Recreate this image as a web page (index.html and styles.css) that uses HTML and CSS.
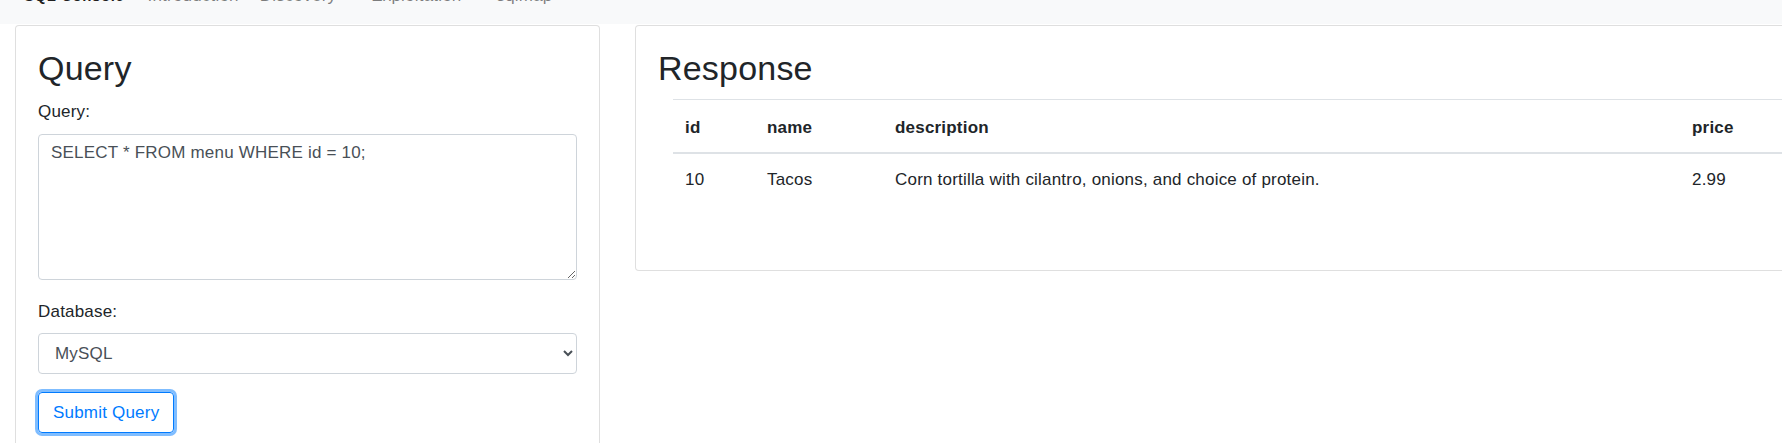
FILE: index.html
```html
<!DOCTYPE html>
<html lang="en">
<head>
<meta charset="utf-8">
<title>SQL Console</title>
<link rel="stylesheet" href="styles.css">
</head>
<body>
<nav class="navbar">
  <span class="brand">SQL Console</span>
  <ul class="nav">
    <li class="nav-item"><a class="nav-link">Introduction</a></li>
    <li class="nav-item"><a class="nav-link dropdown">Discovery</a></li>
    <li class="nav-item"><a class="nav-link dropdown">Exploitation</a></li>
    <li class="nav-item"><a class="nav-link">sqlmap</a></li>
  </ul>
</nav>
<main class="main">
  <section class="card card-query">
    <h2 class="card-title">Query</h2>
    <form class="form">
      <label class="label label-first" for="q">Query:</label>
      <textarea id="q" class="control textarea">SELECT * FROM menu WHERE id = 10;</textarea>
      <label class="label label-db" for="db">Database:</label>
      <select id="db" class="control select">
        <option>MySQL</option>
        <option>PostgreSQL</option>
        <option>SQLite</option>
      </select>
      <button type="button" class="btn">Submit Query</button>
    </form>
  </section>
  <section class="card card-response">
    <h2 class="card-title">Response</h2>
    <div class="table-wrap">
      <table class="table">
        <thead>
          <tr>
            <th class="c-id">id</th>
            <th class="c-name">name</th>
            <th class="c-desc">description</th>
            <th class="c-price">price</th>
          </tr>
        </thead>
        <tbody>
          <tr>
            <td>10</td>
            <td>Tacos</td>
            <td>Corn tortilla with cilantro, onions, and choice of protein.</td>
            <td>2.99</td>
          </tr>
        </tbody>
      </table>
    </div>
  </section>
</main>
</body>
</html>
```
FILE: styles.css
```css
html, body {
  margin: 0;
  overflow: hidden;
  background: #fff;
}
body {
  font-family: "Liberation Sans", Arial, sans-serif;
  font-size: 17px;
  line-height: 24px;
  color: #212529;
  letter-spacing: 0.2px;
}

/* navbar (page is scrolled: only its lower part shows) */
.navbar {
  display: flex;
  align-items: center;
  height: 56px;
  box-sizing: border-box;
  margin-top: -32px;
  padding: 8px 16px 8px 24px;
  background: #f8f9fa;
}
.brand {
  font-weight: 700;
  font-size: 15px;
  letter-spacing: 0.6px;
  color: rgba(0, 0, 0, 0.9);
  margin-right: 15px;
}
.nav {
  display: flex;
  gap: 5px;
  list-style: none;
  margin: 0;
  padding: 0;
}
.nav-link {
  display: block;
  padding: 8px;
  color: rgba(0, 0, 0, 0.5);
}
.dropdown::after {
  content: "";
  display: inline-block;
  margin-left: 4px;
  vertical-align: 4px;
  border-top: 5px solid;
  border-right: 5px solid transparent;
  border-left: 5px solid transparent;
}

/* layout */
.main {
  display: flex;
  align-items: flex-start;
  gap: 35px;
  margin-top: 1px;
  padding-left: 15px;
}
.card {
  flex: none;
  box-sizing: border-box;
  border: 1px solid rgba(0, 0, 0, 0.125);
  border-radius: 4px;
  background: #fff;
  padding: 23px 22px 22px;
}
.card-query {
  width: 585px;
}
.card-response {
  width: 1250px;
}
.card-title {
  margin: 0 0 12px;
  font-size: 34px;
  font-weight: 400;
  line-height: 38px;
  letter-spacing: 0.2px;
}

/* form */
.form {
  display: flex;
  flex-direction: column;
  align-items: flex-start;
}
.label {
  display: block;
  margin-bottom: 8px;
}
.label-first {
  margin-top: 1px;
  margin-bottom: 10px;
}
.label-db {
  margin-top: 20px;
  margin-bottom: 9px;
}
.control {
  box-sizing: border-box;
  width: 100%;
  font-family: inherit;
  font-size: 17px;
  letter-spacing: inherit;
  line-height: 24px;
  color: #495057;
  background: #fff;
  border: 1px solid #ced4da;
  border-radius: 4px;
  padding: 6px 12px;
  margin: 0;
}
.textarea {
  display: block;
  height: 146px;
}
.select {
  height: 41px;
}
.btn {
  margin-top: 18px;
  height: 41px;
  box-sizing: border-box;
  padding: 6px 14px;
  font-family: inherit;
  font-size: 17px;
  letter-spacing: inherit;
  line-height: 24px;
  color: #007bff;
  background: transparent;
  border: 1px solid #007bff;
  border-radius: 4px;
  box-shadow: 0 0 0 3px rgba(0, 123, 255, 0.5);
}

/* table */
.table-wrap {
  padding-left: 15px;
}
.table {
  table-layout: fixed;
  width: 1127px;
  border-collapse: collapse;
  margin-bottom: 42px;
  color: #212529;
}
.table th,
.table td {
  box-sizing: border-box;
  padding: 14px 12px;
  text-align: left;
  vertical-align: top;
  border-top: 1px solid #dee2e6;
}
.table thead th {
  padding-top: 16px;
  padding-bottom: 12px;
  font-weight: 700;
  border-bottom: 2px solid #dee2e6;
}
.c-id { width: 82px; }
.c-name { width: 128px; }
.c-desc { width: 797px; }
.c-price { width: 120px; }
```
